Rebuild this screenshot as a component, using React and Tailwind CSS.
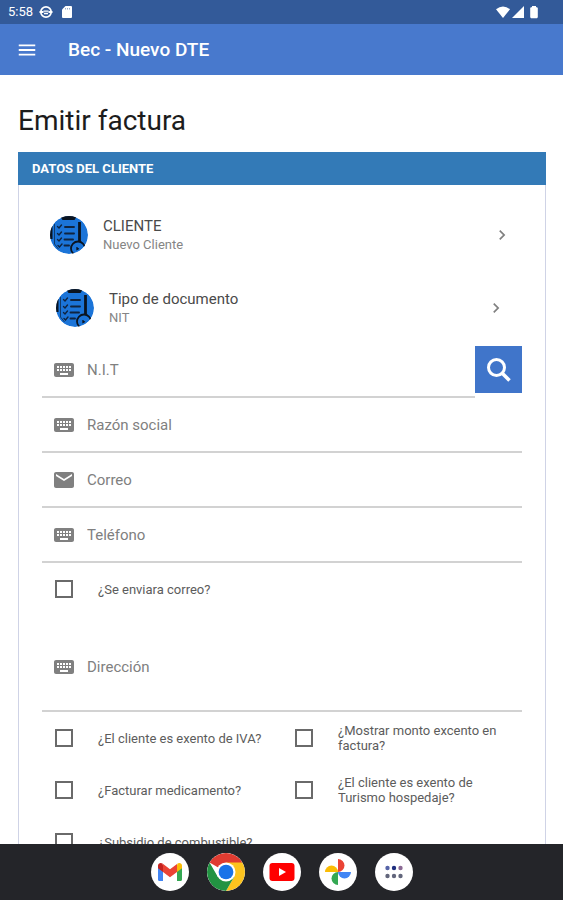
import { useState } from "react";
import { MdChevronRight, MdEmail, MdKeyboard, MdMenu } from "react-icons/md";

function StatusBar() {
  return (
    <div className="flex h-6 shrink-0 items-center justify-between bg-[#335a99] pr-6 pl-2 text-white">
      <div className="flex items-center gap-2">
        <span className="text-[13px] leading-4">5:58</span>
        <svg className="-ml-0.5 size-3.5" viewBox="0 0 14 14" fill="none" stroke="currentColor">
          <circle cx="7" cy="7" r="5.2" strokeWidth="1.7" />
          <path d="M0.500 7h4M9.500 7h4" strokeWidth="1.800" />
          <path d="M4.500 6.200h5M5 8.500h4" strokeWidth="1.300" />
        </svg>
        <svg className="h-3.5 w-3" viewBox="0 0 12 14" fill="currentColor">
          <path d="M4.500 1H10a1 1 0 0 1 1 1v10a1 1 0 0 1-1 1H2a1 1 0 0 1-1-1V4.500z" />
          <path d="M4.500 3v1.500M6.500 3v1.500M8.500 3v1.500" stroke="#335a99" strokeWidth="0.500" />
        </svg>
      </div>
      <div className="flex items-center">
        <svg className="h-3.5 w-4" viewBox="0 0 16 14" fill="currentColor">
          <path d="M1 4.200Q8-1 15 4.200L8 13z" />
        </svg>
        <svg className="h-3.5 w-3.5" viewBox="0 0 14 14" fill="currentColor">
          <path d="M13 1v12H1z" />
        </svg>
        <svg className="ml-1 h-3.5 w-2.5" viewBox="0 0 10 14" fill="currentColor">
          <path d="M3 1h4v1l1.800.8V12.200L8 13.200H2L1.200 12.200V2.800L3 2z" />
        </svg>
      </div>
    </div>
  );
}

function ChecklistAvatar() {
  return (
    <svg className="size-[38px] shrink-0 rounded-full" viewBox="0 0 38 38" fill="none">
      <circle cx="19" cy="19" r="19" fill="#1b74d8" />
      <path d="M10 0h17l-2.500 4h-12z" fill="#0b1420" />
      <path d="M0 10h2.500v13H0z" fill="#0b1420" />
      <path d="M29.500 6v19" stroke="#0b1420" strokeWidth="2.800" />
      <path d="M4.500 8v20l4 5" stroke="#0b1420" strokeWidth="0.600" />
      <g stroke="#10243f" strokeLinecap="round">
        <path d="M15 11h9M15 17.500h9M14.500 23.500h8.500M14.500 29.500h4.500" strokeWidth="1.900" />
        <path d="M7.500 10.500l1.500 1.500 2.500-3M7.500 17.500l1.500 1.500 2.500-3M7.500 23.500l1.500 1.500 2.500-3M8 29.500l1.500 1.500 2.500-3" strokeWidth="1.400" />
      </g>
      <circle cx="28" cy="32.500" r="7" stroke="#0b1420" strokeWidth="1.800" />
      <path d="M27 31v2.500l2-1" stroke="#0b1420" strokeWidth="1.300" />
    </svg>
  );
}

function SearchIcon() {
  return (
    <svg className="size-8" viewBox="0 0 32 32" fill="none" stroke="currentColor">
      <circle cx="13.500" cy="13.500" r="8" strokeWidth="3" />
      <path d="M19.500 19.500l7 7" strokeWidth="3.600" />
    </svg>
  );
}

function PickerRow({ title, value, inset }) {
  return (
    <button type="button" className={`flex h-[73px] w-full items-center text-left ${inset ? "px-3.5" : "px-2"}`}>
      <ChecklistAvatar />
      <span className="ml-[15px] flex-1">
        <span className="block text-[15px] leading-5 text-[#4a4a4a]">{title}</span>
        <span className="block text-[13px] leading-[18px] text-[#858585]">{value}</span>
      </span>
      <MdChevronRight className="mr-0.5 size-5 text-[#808080]" />
    </button>
  );
}

function Field({ label, type = "text", icon: Icon = MdKeyboard, tall }) {
  return (
    <label
      className={`flex min-w-0 flex-1 items-center border-b-2 border-[#d2d2d2] pl-2.5 ${tall ? "h-[97px] pt-2" : "h-[55px]"}`}
    >
      <Icon className="size-6 shrink-0 text-[#808080]" />
      <input
        type={type}
        aria-label={label}
        placeholder={label}
        className="ml-[11px] w-full min-w-0 bg-transparent text-[15px] leading-5 text-[#333333] outline-none placeholder:text-[#808080]"
      />
    </label>
  );
}

function Check({ label }) {
  const [checked, setChecked] = useState(false);
  return (
    <label className="flex h-[52px] items-center pl-[13px]">
      <input
        type="checkbox"
        checked={checked}
        onChange={(event) => setChecked(event.target.checked)}
        className="size-[18px] shrink-0 appearance-none border-2 border-[#6a6a6a] bg-white checked:bg-[#4879cd]"
      />
      <span className="ml-[25px] text-[13px] leading-[15px] text-[#5c5c5c]">{label}</span>
    </label>
  );
}

function GmailLogo() {
  return (
    <svg className="h-5 w-[26px]" viewBox="0 0 26 20">
      <path d="M1 4v13.500a1.500 1.500 0 0 0 1.500 1.500H6V8z" fill="#4285f4" />
      <path d="M25 4v13.500a1.500 1.500 0 0 1-1.500 1.500H20V8z" fill="#34a853" />
      <path d="M20 3.500V10l5-3.700V3.700C25 1 22.200.2 20.500 1.500z" fill="#fbbc04" />
      <path d="M1 3.700v2.600L6 10V3.500L5.500 1.500C3.800.2 1 1 1 3.700z" fill="#c5221f" />
      <path d="M6 3v7l7 5.300 7-5.300V2L13 7.200 5.500 1.500z" fill="#ea4335" />
    </svg>
  );
}

function ChromeLogo() {
  return (
    <svg className="size-[38px]" viewBox="0 0 48 48">
      <path d="M24 24L3.220 12A24 24 0 0 1 44.780 12z" fill="#e03c31" />
      <path d="M24 12h20.780A24 24 0 0 1 24 48l10.400-18z" fill="#fcc31e" />
      <path d="M13.610 30L3.220 12A24 24 0 0 0 24 48l10.390-18z" fill="#229342" />
      <circle cx="24" cy="24" r="12" fill="#fff" />
      <circle cx="24" cy="24" r="9.300" fill="#1a73e8" />
    </svg>
  );
}

function YoutubeLogo() {
  return (
    <svg className="h-[18px] w-[26px]" viewBox="0 0 26 18">
      <rect x="0.500" width="25" height="18" rx="3" fill="#ff0000" />
      <path d="M10 5l7 4-7 4z" fill="#fff" />
    </svg>
  );
}

function PhotosLogo() {
  return (
    <svg className="size-7" viewBox="0 0 28 28">
      <path d="M14 1a6.500 6.500 0 0 1 0 13z" fill="#ea4335" />
      <path d="M27 14a6.500 6.500 0 0 1-13 0z" fill="#4285f4" />
      <path d="M14 27a6.500 6.500 0 0 1 0-13z" fill="#34a853" />
      <path d="M1 14a6.500 6.500 0 0 1 13 0z" fill="#fbbc04" />
    </svg>
  );
}

function AppsLogo() {
  return (
    <svg className="h-[14px] w-5" viewBox="0 0 20 14">
      <circle cx="3.500" cy="3" r="2.200" fill="#5664a8" />
      <circle cx="10" cy="3" r="2.200" fill="#20307f" />
      <circle cx="16.500" cy="3" r="2.200" fill="#8b6a94" />
      <circle cx="3.500" cy="11" r="2.200" fill="#62667c" />
      <circle cx="10" cy="11" r="2.200" fill="#62667c" />
      <circle cx="16.500" cy="11" r="2.200" fill="#62667c" />
    </svg>
  );
}

const apps = [
  { name: "Gmail", Logo: GmailLogo },
  { name: "Chrome", Logo: ChromeLogo },
  { name: "YouTube", Logo: YoutubeLogo },
  { name: "Fotos", Logo: PhotosLogo },
  { name: "Aplicaciones", Logo: AppsLogo },
];

export default function App() {
  return (
    <div className="flex h-screen flex-col overflow-hidden bg-white font-['Roboto',sans-serif]">
      <StatusBar />
      <header className="flex h-[51px] shrink-0 items-center bg-[#4879cd] px-4 text-white">
        <button type="button" aria-label="Menú">
          <MdMenu className="size-[22px]" />
        </button>
        <span className="ml-[30px] text-[19px] leading-6 font-medium">Bec - Nuevo DTE</span>
      </header>

      <main className="min-h-0 flex-1 overflow-hidden pt-7 pr-[17px] pl-[18px]">
        <h1 className="text-[28px] leading-9 text-[#1c1c1c]">Emitir factura</h1>
        <section className="mt-[13px] border border-[#cfd3e6]">
          <h2 className="-mx-px -mt-px flex h-[33px] items-center bg-[#337ab7] px-3.5 text-[13px] leading-4 font-bold text-white">
            DATOS DEL CLIENTE
          </h2>
          <form className="px-[23px] pt-[13px]" onSubmit={(event) => event.preventDefault()}>
            <PickerRow title="CLIENTE" value="Nuevo Cliente" />
            <PickerRow title="Tipo de documento" value="NIT" inset />
            <div className="-mt-px flex items-center">
              <Field label="N.I.T" />
              <button
                type="button"
                aria-label="Buscar"
                className="mb-0.5 flex size-[47px] shrink-0 items-center justify-center bg-[#4075ca] text-white"
              >
                <SearchIcon />
              </button>
            </div>
            <div className="flex"><Field label="Razón social" /></div>
            <div className="flex"><Field label="Correo" type="email" icon={MdEmail} /></div>
            <div className="flex"><Field label="Teléfono" type="tel" /></div>
            <Check label="¿Se enviara correo?" />
            <div className="flex"><Field label="Dirección" tall /></div>
            <div className="grid grid-cols-2">
              <Check label="¿El cliente es exento de IVA?" />
              <Check label="¿Mostrar monto excento en factura?" />
              <Check label="¿Facturar medicamento?" />
              <Check label="¿El cliente es exento de Turismo hospedaje?" />
              <Check label="¿Subsidio de combustible?" />
            </div>
          </form>
        </section>
      </main>

      <nav className="flex h-14 shrink-0 items-center justify-center gap-[18px] bg-[#242529]">
        {apps.map(({ name, Logo }) => (
          <button
            key={name}
            type="button"
            aria-label={name}
            className="flex size-[38px] items-center justify-center overflow-hidden rounded-full bg-white"
          >
            <Logo />
          </button>
        ))}
      </nav>
    </div>
  );
}
